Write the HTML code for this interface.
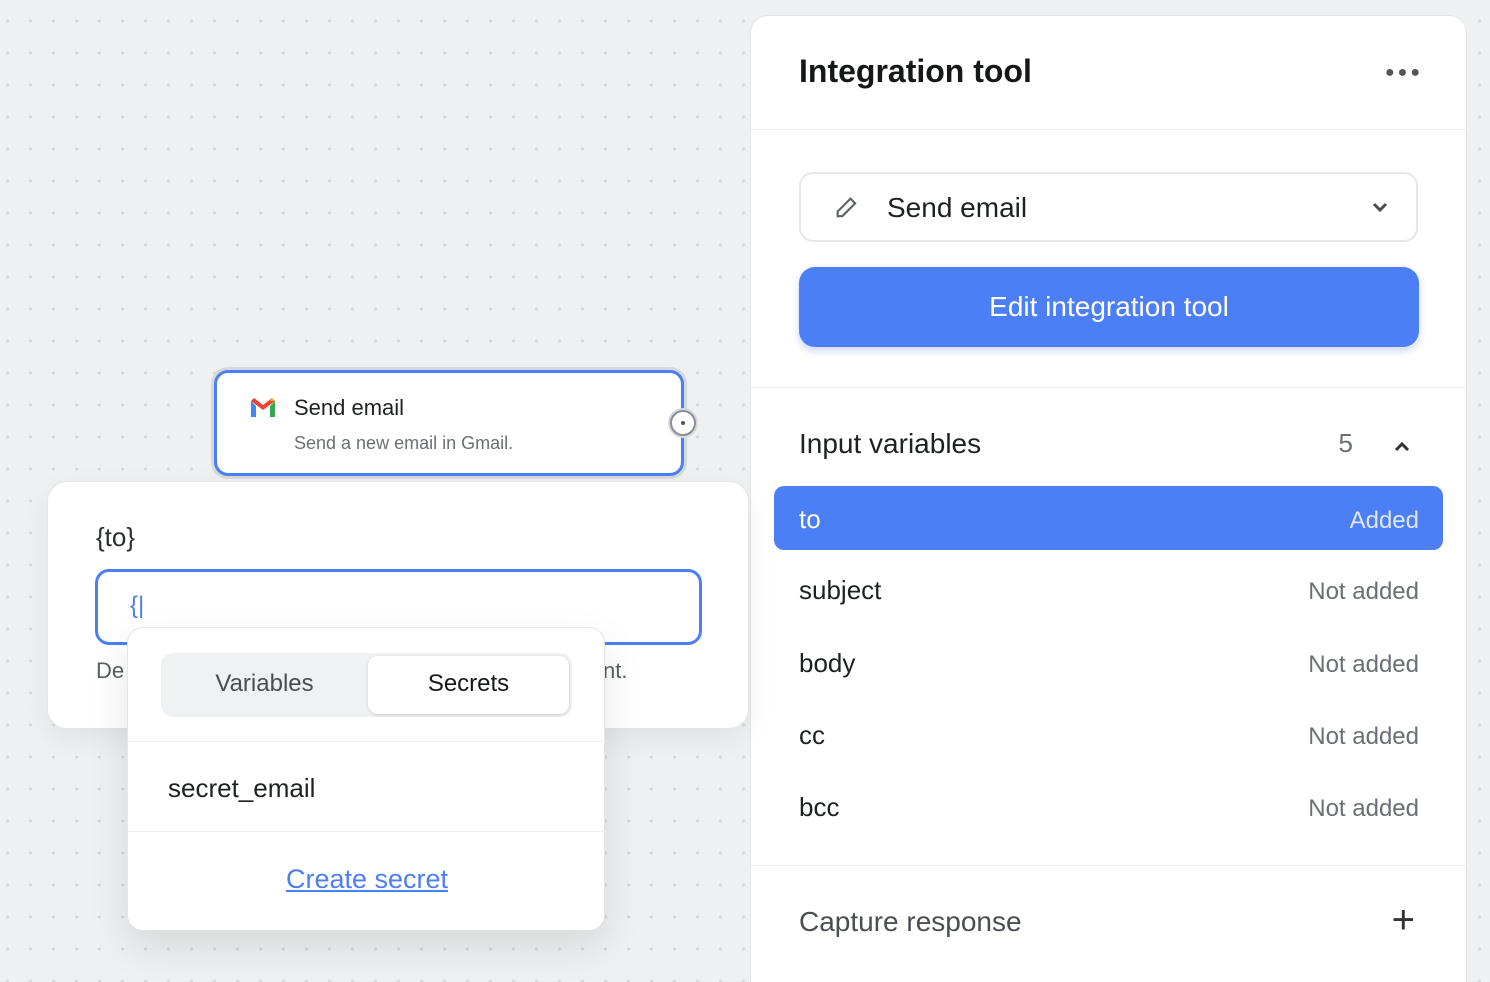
<!DOCTYPE html>
<html><head><style>
*{box-sizing:border-box;margin:0;padding:0}
html,body{width:1490px;height:982px;overflow:hidden}
body{position:relative;font-family:"Liberation Sans",sans-serif;background-color:#eef0f1;background-image:radial-gradient(circle,#d3d7da 1.3px,transparent 1.6px);background-size:23px 32px;background-position:-4px 5px}
.abs{position:absolute}
.panel{left:750px;top:15px;width:717px;height:990px;background:#fff;border-radius:18px;border:1px solid #e3e5e7}
.sep{left:0;width:717px;height:1px;background:#eceef0}
.row{left:48px;width:620px;font-size:26px;color:#1e2124}
.row span{position:absolute;right:0;top:3px;color:#6a6f75;font-size:24px}
</style></head><body>
<div class="abs panel">
 <div class="abs" style="left:48px;top:37px;font-size:32px;font-weight:bold;color:#15171a">Integration tool</div>
 <div class="abs" style="left:634px;top:48px;font-size:16px;letter-spacing:3px;color:#555">●●●</div>
 <div class="abs sep" style="top:113px"></div>
 <div class="abs" style="left:48px;top:156px;width:619px;height:70px;border:2px solid #e5e7e9;border-radius:14px">
  <svg class="abs" style="left:32px;top:20px" width="28" height="28" viewBox="0 0 24 24" fill="none" stroke="#5c6167" stroke-width="1.8"><path d="M15 4l4 4L8 19H4v-4z"/></svg>
  <div class="abs" style="left:86px;top:18px;font-size:28px;color:#1e2124">Send email</div>
  <svg class="abs" style="left:570px;top:26px" width="18" height="14" viewBox="0 0 18 14" fill="none" stroke="#4a4e53" stroke-width="3"><path d="M3 4l6 6 6-6"/></svg>
 </div>
 <div class="abs" style="left:48px;top:251px;width:620px;height:80px;background:#4c7ef5;border-radius:16px;color:#fff;font-size:28px;text-align:center;line-height:80px;box-shadow:0 4px 8px rgba(60,100,200,.25)">Edit integration tool</div>
 <div class="abs sep" style="top:371px"></div>
 <div class="abs row" style="top:412px;font-size:28px">Input variables<span style="right:66px;top:0;font-size:26px">5</span></div>
 <svg class="abs" style="left:642px;top:424px" width="18" height="14" viewBox="0 0 18 14" fill="none" stroke="#333" stroke-width="3"><path d="M3 10l6-6 6 6"/></svg>
 <div class="abs" style="left:23px;top:470px;width:669px;height:64px;background:#4c7ef5;border-radius:10px"></div>
 <div class="abs row" style="top:488px;color:#fff">to<span style="color:#dfe7fd">Added</span></div>
 <div class="abs row" style="top:559px">subject<span>Not added</span></div>
 <div class="abs row" style="top:632px">body<span>Not added</span></div>
 <div class="abs row" style="top:704px">cc<span>Not added</span></div>
 <div class="abs row" style="top:776px">bcc<span>Not added</span></div>
 <div class="abs sep" style="top:849px"></div>
 <div class="abs row" style="top:890px;font-size:28px;color:#4a4e53">Capture response<span style="right:4px;top:-8px;font-size:40px;color:#333">+</span></div>
</div>

<div class="abs" style="left:214px;top:370px;width:470px;height:106px;border:3px solid #4c7ef5;border-radius:14px;background:#fff;box-shadow:0 0 0 3px #d6d9dc">
 <svg class="abs" style="left:32px;top:24px" width="28" height="22" viewBox="0 0 28 22"><path d="M2 4v16h5V9z" fill="#4285f4"/><path d="M21 9v11h5V4z" fill="#34a853"/><path d="M2 4l12 9 12-9-3-3-9 7-9-7z" fill="#ea4335"/><path d="M21 4l5 0-3-3z" fill="#fbbc04"/></svg>
 <div class="abs" style="left:77px;top:22px;font-size:22px;color:#1e2124">Send email</div>
 <div class="abs" style="left:77px;top:60px;font-size:18px;color:#6a6f75">Send a new email in Gmail.</div>
</div>
<div class="abs" style="left:670px;top:410px;width:26px;height:26px;border-radius:50%;background:#fff;border:2px solid #8a8f95;box-shadow:0 0 0 2px #d6d9dc"><div class="abs" style="left:9px;top:9px;width:4px;height:4px;border-radius:50%;background:#555"></div></div>

<div class="abs" style="left:47px;top:481px;width:702px;height:248px;background:#fff;border-radius:20px;border:1px solid #e3e5e7;box-shadow:0 10px 30px rgba(0,0,0,.06)">
 <div class="abs" style="left:48px;top:40px;font-size:26px;color:#2a2d31">{to}</div>
 <div class="abs" style="left:47px;top:87px;width:607px;height:76px;border:3px solid #4c7ef5;border-radius:14px"><div class="abs" style="left:32px;top:20px;font-size:24px;color:#4c7ef5">{|</div></div>
 <div class="abs" style="left:48px;top:176px;font-size:22px;color:#5a5f65">De</div>
 <div class="abs" style="left:555px;top:176px;font-size:22px;color:#5a5f65">nt.</div>
</div>

<div class="abs" style="left:127px;top:627px;width:478px;height:304px;background:#fff;border-radius:16px;border:1px solid #e3e5e7;box-shadow:0 16px 40px rgba(0,0,0,.10)">
 <div class="abs" style="left:33px;top:25px;width:411px;height:64px;background:#eff1f2;border-radius:12px"></div>
 <div class="abs" style="left:240px;top:28px;width:201px;height:58px;background:#fff;border-radius:10px;box-shadow:0 1px 3px rgba(0,0,0,.15)"></div>
 <div class="abs" style="left:33px;top:42px;width:207px;text-align:center;font-size:24px;color:#4a4e53">Variables</div>
 <div class="abs" style="left:240px;top:42px;width:201px;text-align:center;font-size:24px;color:#15171a">Secrets</div>
 <div class="abs" style="left:0;top:113px;width:478px;height:1px;background:#eceef0"></div>
 <div class="abs" style="left:40px;top:145px;font-size:26px;color:#1e2124">secret_email</div>
 <div class="abs" style="left:0;top:203px;width:478px;height:1px;background:#eceef0"></div>
 <div class="abs" style="left:0;top:236px;width:478px;text-align:center;font-size:27px;color:#4c7ef5;text-decoration:underline">Create secret</div>
</div>
</body></html>
